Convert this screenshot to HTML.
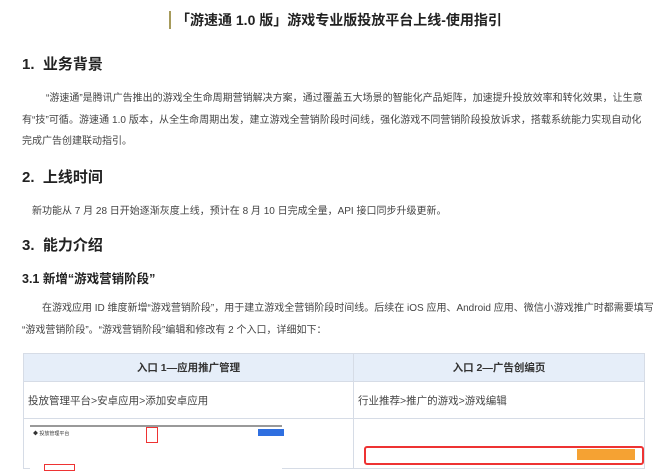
<!DOCTYPE html>
<html><head><meta charset="utf-8"><style>
body{margin:0;width:666px;height:464px;overflow:hidden;background:#fff;font-family:"Liberation Sans","Noto Sans CJK SC",sans-serif;color:#333;position:relative}
.a{position:absolute;white-space:nowrap}
.h{font-weight:bold;font-size:15px;color:#222}
.p{font-size:10px;color:#444}
td{border:1px solid #d6dce6;padding:0;font-size:10.5px;color:#444}
</style></head><body>
<div class="a" style="left:169px;top:11px;width:2px;height:18px;background:#a69b5c"></div>
<div class="a" style="left:176px;top:10px;font-size:14px;font-weight:bold;color:#222">「游速通 1.0 版」游戏专业版投放平台上线-使用指引</div>
<div class="a h" style="left:22px;top:53px">1.&nbsp; 业务背景</div>
<div class="a p" style="left:46px;top:89px">“游速通”是腾讯广告推出的游戏全生命周期营销解决方案，通过覆盖五大场景的智能化产品矩阵，加速提升投放效率和转化效果，让生意</div>
<div class="a p" style="left:22px;top:111px;letter-spacing:0.05px">有“技”可循。游速通 1.0 版本，从全生命周期出发，建立游戏全营销阶段时间线，强化游戏不同营销阶段投放诉求，搭载系统能力实现自动化</div>
<div class="a p" style="left:22px;top:132px">完成广告创建联动指引。</div>
<div class="a h" style="left:22px;top:166px">2.&nbsp; 上线时间</div>
<div class="a p" style="left:32px;top:202px">新功能从 7 月 28 日开始逐渐灰度上线，预计在 8 月 10 日完成全量，API 接口同步升级更新。</div>
<div class="a h" style="left:22px;top:234px">3.&nbsp; 能力介绍</div>
<div class="a" style="left:22px;top:268px;font-size:12.5px;font-weight:bold;color:#222">3.1 新增“游戏营销阶段”</div>
<div class="a p" style="left:42px;top:299px">在游戏应用 ID 维度新增“游戏营销阶段”，用于建立游戏全营销阶段时间线。后续在 iOS 应用、Android 应用、微信小游戏推广时都需要填写</div>
<div class="a p" style="left:22px;top:321px">“游戏营销阶段”。“游戏营销阶段”编辑和修改有 2 个入口，详细如下：</div>
<table class="a" style="left:23px;top:353px;width:622px;border-collapse:collapse">
<tr style="height:28px;background:#e6eef9"><td style="width:329px;text-align:center;font-weight:bold;color:#333">入口 1—应用推广管理</td><td style="text-align:center;font-weight:bold;color:#333">入口 2—广告创编页</td></tr>
<tr style="height:37px"><td style="padding-left:4px">投放管理平台&gt;安卓应用&gt;添加安卓应用</td><td style="padding-left:4px">行业推荐&gt;推广的游戏&gt;游戏编辑</td></tr>
<tr style="height:50px"><td style="vertical-align:top;position:relative">
<div style="position:absolute;left:6px;top:6px;width:252px;height:44px;border-top:2px solid #999;background:#fff">
<div style="position:absolute;left:3px;top:3px;font-size:5px;color:#333">◆ 投放管理平台</div>
<div style="position:absolute;left:116px;top:0;width:10px;height:14px;border:1px solid #e33"></div>
<div style="position:absolute;left:228px;top:2px;width:26px;height:7px;background:#2f6fe0"></div>
<div style="position:absolute;left:14px;top:37px;width:29px;height:5px;border:1px solid #e33"></div>
</div></td>
<td style="position:relative"><div style="position:absolute;left:10px;top:27px;width:276px;height:15px;border:2px solid #e33;border-radius:3px"></div>
<div style="position:absolute;left:223px;top:30px;width:58px;height:11px;background:#f5a233"></div></td></tr>
</table>
</body></html>
